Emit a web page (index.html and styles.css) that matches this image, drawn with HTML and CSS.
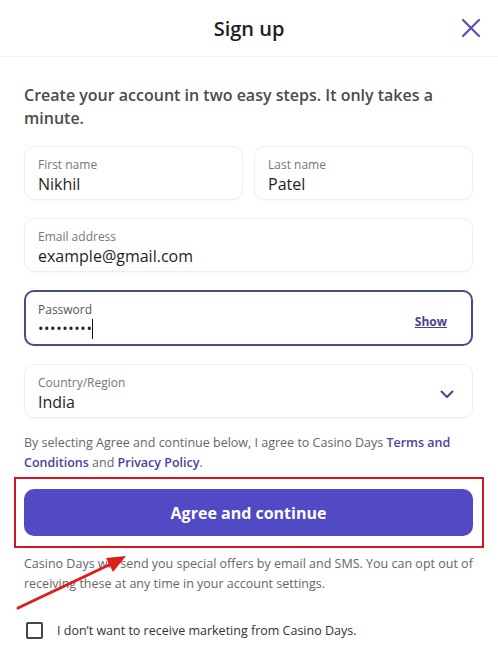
FILE: index.html
```html
<!DOCTYPE html>
<html lang="en">
<head>
  <meta charset="UTF-8" />
  <meta name="viewport" content="width=device-width, initial-scale=1.0"/>
  <title>Sign up</title>
  <link rel="stylesheet" href="styles.css">
</head>
<body>

  <header class="modal-head">
    <h1>Sign up</h1>
    <button class="close" aria-label="Close">
      <svg width="20" height="20" viewBox="0 0 20 20"><path d="M2 2 L18 18 M18 2 L2 18" stroke="#5a4fb2" stroke-width="2.2" stroke-linecap="round"/></svg>
    </button>
  </header>

  <main class="modal-body">
    <p class="intro">Create your account in two easy steps. It only takes a minute.</p>

    <form class="signup">
      <div class="row">
        <div class="field">
          <label>First name</label>
          <div class="value">Nikhil</div>
        </div>
        <div class="field">
          <label>Last name</label>
          <div class="value">Patel</div>
        </div>
      </div>

      <div class="field">
        <label>Email address</label>
        <div class="value">example@gmail.com</div>
      </div>

      <div class="field focused">
        <div class="grow">
          <label>Password</label>
          <div class="value dots">•••••••••<span class="caret"></span></div>
        </div>
        <a class="show" href="#">Show</a>
      </div>

      <div class="field">
        <div class="grow">
          <label>Country/Region</label>
          <div class="value">India</div>
        </div>
        <svg class="chev" width="14" height="9" viewBox="0 0 14 9"><path d="M1.5 1.5 L7 7 L12.5 1.5" fill="none" stroke="#4a4196" stroke-width="2" stroke-linecap="round" stroke-linejoin="round"/></svg>
      </div>

      <p class="small terms">By selecting Agree and continue below, I agree to Casino Days <a href="#">Terms and Conditions</a> and <a href="#">Privacy Policy</a>.</p>

      <div class="highlight">
        <button type="submit" class="primary">Agree and continue</button>
        <svg class="arrow" width="120" height="70" viewBox="0 0 120 70"><path d="M2 62 L95 18" stroke="#dc1d1d" stroke-width="3" stroke-linecap="round"/><path d="M110 10 L90 12 L97 26 Z" fill="#dc1d1d"/></svg>
      </div>

      <p class="small offers">Casino Days will send you special offers by email and SMS. You can opt out of receiving these at any time in your account settings.</p>

      <label class="check">
        <span class="box"></span>
        I don’t want to receive marketing from Casino Days.
      </label>
    </form>
  </main>

</body>
</html>
```

FILE: styles.css
```css
body {margin: 0; font-family: "Open Sans", "Noto Sans", sans-serif; background-color: #fff; color: #222;}
.modal-head {position: relative; height: 56px; border-bottom: 1px solid #f0f0f0; display: flex; align-items: center; justify-content: center;}
.modal-head h1 {margin: 0; font-size: 20px; font-weight: 600; color: #1e1e1e;}
.close {position: absolute; right: 16px; top: 17px; background: none; border: none; padding: 0; width: 22px; height: 22px; display: flex; align-items: center; justify-content: center;}
.modal-body {padding: 27px 25px 0 24px;}
.intro {margin: 0 0 16px; font-size: 16px; font-weight: 600; line-height: 23px; color: #4b4b4b;}
.signup {display: flex; flex-direction: column; gap: 18px;}
.row {display: grid; grid-template-columns: 1fr 1fr; gap: 11px;}
.field {display: flex; align-items: center; height: 54px; box-sizing: border-box; border: 1px solid #efefef; border-radius: 10px; padding: 6px 13px 0; box-shadow: 0 1px 2px rgba(0,0,0,0.03);}
.field > label, .grow label {display: block; font-size: 12px; line-height: 16px; color: #777;}
.field:not(:has(.grow)) {flex-direction: column; align-items: stretch; justify-content: center;}
.grow {flex: 1;}
.value {font-size: 16px; line-height: 22px; color: #1e1e1e;}
.focused {border: 2px solid #454c8c; height: 56px; padding-left: 12px; padding-right: 24px;}
.focused label {color: #555;}
.dots {font-size: 14.5px; letter-spacing: 0.6px; display: flex; align-items: center;}
.caret {display: inline-block; width: 1px; height: 20px; background: #111; margin-left: 0;}
.show {font-size: 12px; font-weight: 700; color: #4a4196; text-decoration: underline;}
.chev {margin-right: 5px;}
.small {margin: 0; font-size: 12.5px; line-height: 20px; color: #666;}
.small a {color: #4a3f9e; font-weight: 600; text-decoration: none;}
.terms {margin-top: -3px;}
.highlight {position: relative; margin: -14px -11px 0 -10px; border: 2px solid #d8141c; padding: 10px 9px 10px 8px;}
.primary {width: 100%; height: 47px; border: none; border-radius: 10px; background-color: #5249c5; color: white; font-family: inherit; font-size: 16px; font-weight: 700; cursor: pointer;}
.arrow {position: absolute; left: 0; top: 67px;}
.offers {margin-top: -12px;}
.check {display: flex; align-items: center; gap: 14px; font-size: 12.5px; color: #333; margin-top: 10px; padding-left: 2px;}
.box {width: 13px; height: 13px; border: 2px solid #444; border-radius: 2px;}
```
